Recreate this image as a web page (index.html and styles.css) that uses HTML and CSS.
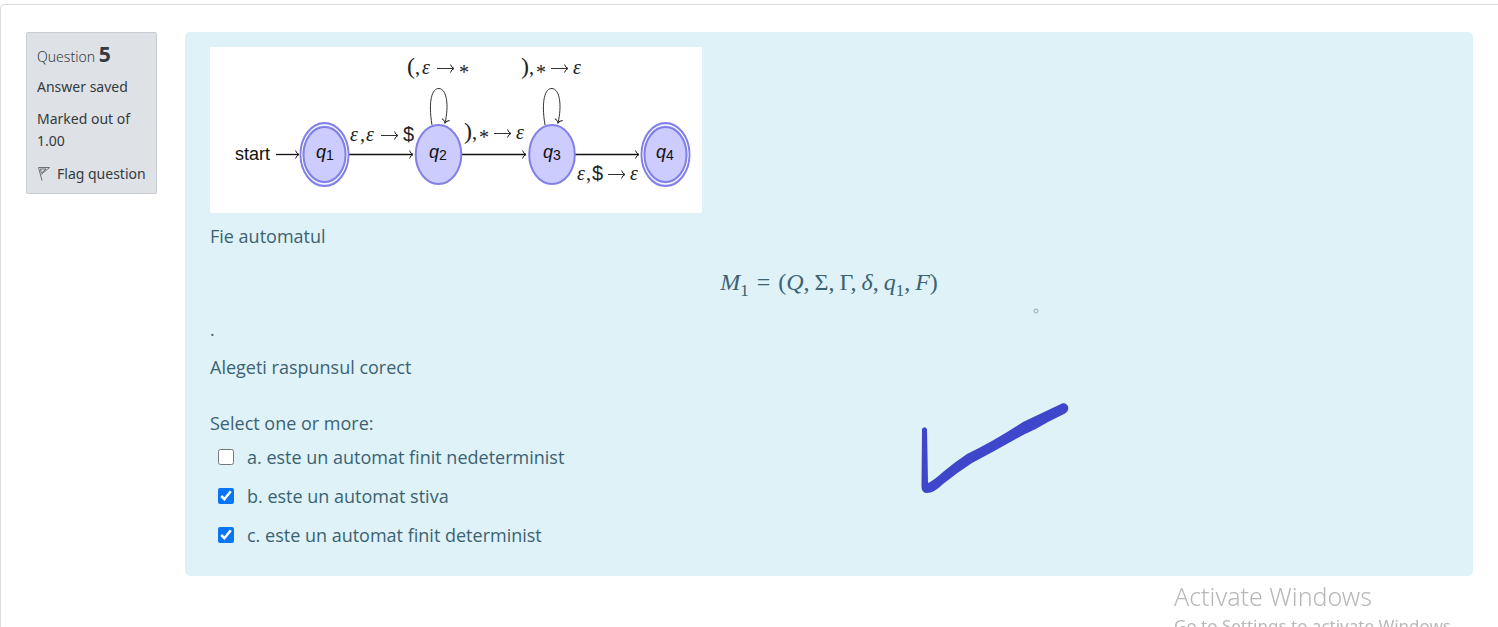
FILE: index.html
```html
<!DOCTYPE html>
<html lang="ro">
<head>
<meta charset="utf-8">
<title>Question 5</title>
<link rel="stylesheet" href="styles.css">
</head>
<body>
<main class="card">
  <aside class="info">
    <h3 class="info-title">Question <b>5</b></h3>
    <div class="info-state">Answer saved</div>
    <div class="info-grade">Marked out of 1.00</div>
    <a class="flag" href="#flag">
      <svg class="flag-icon" viewBox="0 0 14 16" aria-hidden="true"><path d="M1.500 1.500 5 14.500M1.500 1.500H12.500L4.200 8.500M3.300 3H9L4.500 7Z"/></svg>
      <span>Flag question</span>
    </a>
  </aside>
  <section class="question">
    <svg class="diagram" viewBox="0 0 492 166" role="img" aria-label="Automaton with states q1 to q4">
      <defs>
        <marker id="tip" viewBox="0 0 6 10" refX="5" refY="5" markerWidth="6" markerHeight="10" markerUnits="userSpaceOnUse" orient="auto"><path class="tip" d="M1.500 1Q2.500 4 5 5Q2.500 6 1.500 9"/></marker>
      </defs>
      <g class="edges">
        <path d="M66 107.500H89"/>
        <path d="M139 107.500H203"/>
        <path d="M252 107.500H316"/>
        <path d="M365 107.500H429"/>
        <path class="loop" d="M222 78C218 54 222 41 229 41.500C237 42 239 59 235 76"/>
        <path class="loop" d="M335 78C331 54 335 41 342 41.500C350 42 352 59 348 76"/>
        <path class="arrow" d="M227 21.500H244"/>
        <path class="arrow" d="M341 21.500H358"/>
        <path class="arrow" d="M171 88.500H188"/>
        <path class="arrow" d="M284 86.500H301"/>
        <path class="arrow" d="M398 127.500H415"/>
      </g>
      <g class="states">
        <ellipse cx="114.500" cy="107.500" rx="24" ry="31.500"/><ellipse class="ring" cx="114.500" cy="107.500" rx="22.500" ry="29.500"/><ellipse cx="114.500" cy="107.500" rx="21" ry="27.500"/>
        <ellipse cx="228.500" cy="107.500" rx="22.800" ry="29.500"/>
        <ellipse cx="342" cy="107.500" rx="22.800" ry="29.500"/>
        <ellipse cx="455.500" cy="107.500" rx="24" ry="31.500"/><ellipse class="ring" cx="455.500" cy="107.500" rx="22.500" ry="29.500"/><ellipse cx="455.500" cy="107.500" rx="21" ry="27.500"/>
      </g>
      <text class="sans" x="25" y="113">start</text>
      <text class="sans" x="106" y="111"><tspan class="it">q</tspan><tspan class="sub" dy="2">1</tspan></text>
      <text class="sans" x="219" y="111"><tspan class="it">q</tspan><tspan class="sub" dy="2">2</tspan></text>
      <text class="sans" x="333" y="111"><tspan class="it">q</tspan><tspan class="sub" dy="2">3</tspan></text>
      <text class="sans" x="446" y="111"><tspan class="it">q</tspan><tspan class="sub" dy="2">4</tspan></text>
      <g class="label">
        <text y="27"><tspan class="paren" x="197">(</tspan><tspan x="205">,</tspan><tspan class="it" x="212">ε</tspan><tspan x="249" dy="5">*</tspan></text>
        <text y="27"><tspan class="paren" x="311">)</tspan><tspan x="319">,</tspan><tspan x="326" dy="5">*</tspan><tspan class="it" x="363" dy="-5">ε</tspan></text>
        <text y="94"><tspan class="it" x="140">ε</tspan><tspan x="150">,</tspan><tspan class="it" x="156">ε</tspan><tspan class="dollar" x="193">$</tspan></text>
        <text y="92"><tspan class="paren" x="254">)</tspan><tspan x="262">,</tspan><tspan x="269" dy="5">*</tspan><tspan class="it" x="306" dy="-5">ε</tspan></text>
        <text y="133"><tspan class="it" x="367">ε</tspan><tspan x="376">,</tspan><tspan class="dollar" x="382">$</tspan><tspan class="it" x="420">ε</tspan></text>
      </g>
    </svg>
    <p class="text">Fie automatul</p>
    <div class="formula"><span><i>M</i><sub>1</sub></span><span class="eq">=</span><span>(<i>Q</i>,</span><span>Σ,</span><span>Γ,</span><span><i>δ</i>,</span><span><i>q</i><sub>1</sub>,</span><span><i>F</i>)</span></div>
    <p class="text">.</p>
    <p class="text">Alegeti raspunsul corect</p>
    <fieldset class="answers">
      <legend class="prompt">Select one or more:</legend>
      <label class="answer"><input type="checkbox"><span>a. este un automat finit nedeterminist</span></label>
      <label class="answer"><input type="checkbox" checked><span>b. este un automat stiva</span></label>
      <label class="answer"><input type="checkbox" checked><span>c. este un automat finit determinist</span></label>
    </fieldset>
    <svg class="ink" viewBox="0 0 150 94" aria-hidden="true"><path d="M2 27Q4.500 23.500 7 27L8 81Q13 79 23 70Q35 60 47 52Q74 39 103 20L142 1.500C148 0 151 8 145 11.500L128 20Q115 28 103 33Q77 48 52 61Q38 70 23 82Q14 91 7 91Q1 91 1.500 83Z"/></svg>
    <svg class="dot" viewBox="0 0 6 6" aria-hidden="true"><circle cx="3" cy="3" r="2"/></svg>
  </section>
</main>
<div class="watermark"><div class="watermark-title">Activate Windows</div><div>Go to Settings to activate Windows.</div></div>
</body>
</html>
```
FILE: styles.css
```css
* { box-sizing: border-box; }
body {
  margin: 0;
  padding-top: 4px;
  background: #fff;
  font-family: "Noto Sans", sans-serif;
  font-size: 18px;
  line-height: 28px;
  overflow: hidden;
}
.card {
  display: flex;
  align-items: flex-start;
  gap: 28px;
  min-height: 100vh;
  padding: 27px 25px;
  border: 1px solid #dcdcdd;
  border-right: 0;
  border-radius: 5px 0 0 0;
}
.info {
  flex: 0 0 131px;
  padding: 9px 8px 8px 10px;
  background: #dee2e6;
  border: 1px solid #c8ccd0;
  border-radius: 2px;
  color: #343a40;
  font-size: 14px;
  line-height: 22px;
}
.info-title { margin: 0 0 7px; font-size: 14px; font-weight: 300; line-height: 24px; }
.info-title b { font-size: 21px; font-weight: 700; line-height: 24px; }
.info-state { margin-bottom: 10px; }
.info-grade { margin-bottom: 11px; }
.flag { display: flex; align-items: center; gap: 6px; color: inherit; text-decoration: none; white-space: nowrap; }
.flag-icon { flex: none; width: 14px; height: 16px; fill: none; stroke: #6c7073; stroke-width: 1; }
.question {
  position: relative;
  flex: 1;
  padding: 15px 25px 16px;
  background: #def2f8;
  border-radius: 5px;
  color: #3c6272;
  font-family: "Open Sans", "Noto Sans", sans-serif;
}
.diagram { display: block; width: 492px; max-width: 100%; margin-bottom: 9px; background: #fff; }
.edges path { fill: none; stroke: #111; stroke-width: 1.300; marker-end: url(#tip); }
.edges .loop, .edges .arrow { stroke: #333; stroke-width: 1; }
.tip { fill: none; stroke: #222; stroke-width: 1; }
.states ellipse { fill: #ccccff; stroke: #8080e6; stroke-width: 2; }
.states .ring { fill: none; stroke: #fff; stroke-width: 1; }
.sans { font-family: "Liberation Sans", sans-serif; font-size: 18px; fill: #111; }
.sub { font-size: 14px; }
.it { font-style: italic; }
.label { font-family: "Liberation Serif", serif; font-size: 20px; fill: #222; }
.paren { font-size: 24px; }
.dollar { font-family: "Liberation Sans", sans-serif; font-size: 20px; }
.text { margin: 0 0 10px; }
.formula {
  display: flex;
  justify-content: center;
  align-items: baseline;
  gap: 5px;
  margin: 18px 0 19px;
  font-family: "Liberation Serif", serif;
  font-size: 24px;
  line-height: 28px;
}
.formula sub { font-size: 17px; line-height: 0; }
.eq { padding: 0 3px; }
.answers { margin: 28px 0 0; padding: 0; border: 0; }
.prompt { margin-bottom: 6px; padding: 0; }
.answer { display: flex; align-items: center; gap: 13px; margin-bottom: 11px; padding-left: 8px; }
.answer input { flex: none; width: 16px; height: 16px; margin: 0; accent-color: #0875f5; }
.ink { position: absolute; left: 735px; top: 370px; width: 150px; height: 94px; fill: #3e47cc; }
.dot { position: absolute; left: 848px; top: 276px; width: 6px; height: 6px; fill: none; stroke: #94a9b0; }
.watermark { position: fixed; left: 1174px; top: 580px; color: #b8b8b8; font-size: 17px; line-height: 28px; white-space: nowrap; }
.watermark-title { font-size: 25px; line-height: 32px; font-weight: 300; }
```
